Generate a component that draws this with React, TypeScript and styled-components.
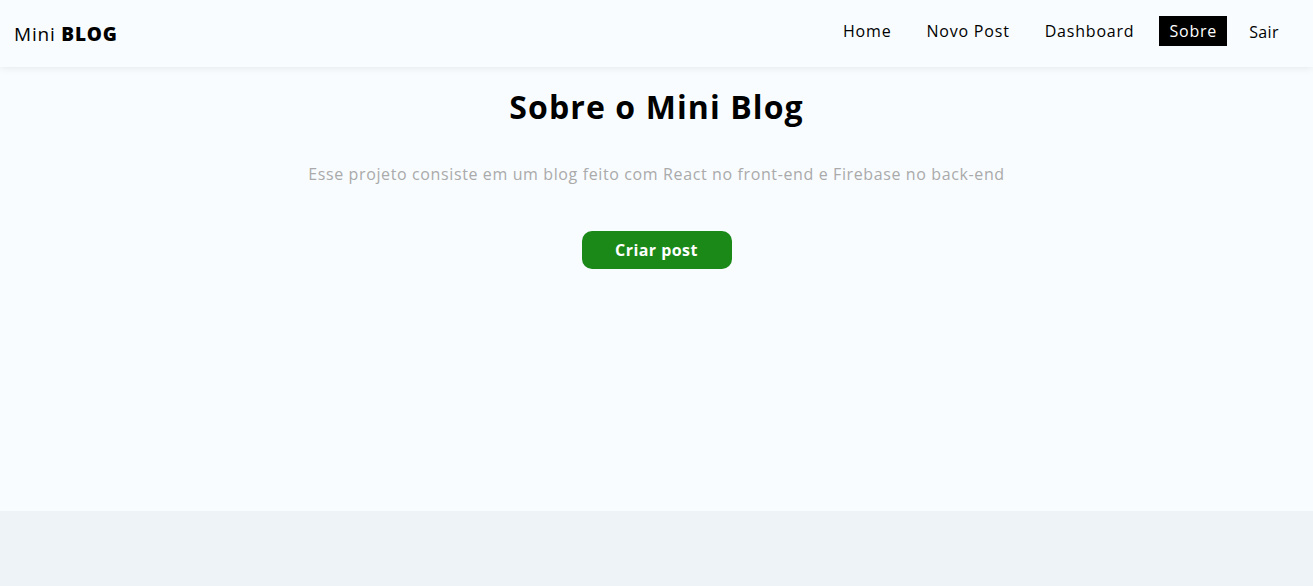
import React from "react";
import styled, { createGlobalStyle } from "styled-components";

const Global = createGlobalStyle`
  * { box-sizing: border-box; }
  body {
    margin: 0;
    background: #f8fcff;
    font-family: "Open Sans", "Noto Sans", sans-serif;
    color: #000;
  }
`;

const Page = styled.div`
  display: flex;
  flex-direction: column;
  min-height: 100vh;
`;

const Navbar = styled.nav`
  display: flex;
  justify-content: space-between;
  align-items: center;
  height: 67px;
  padding: 0 24px 0 14px;
  box-shadow: rgba(0, 0, 0, 0.15) 0px -2px 10px 0px;
  position: relative;
  z-index: 1;
`;

const Brand = styled.a`
  font-size: 19px;
  color: #000;
  text-decoration: none;
  letter-spacing: 0.8px;
  span {
    font-weight: 800;
    text-transform: uppercase;
  }
`;

const Links = styled.ul`
  display: flex;
  list-style: none;
  margin: 0 0 6px;
  padding: 0;
  gap: 15px;
  align-items: center;
`;

const NavLink = styled.a<{ $active?: boolean }>`
  display: block;
  padding: 5px 10px;
  font-size: 16px;
  line-height: 20px;
  text-decoration: none;
  color: ${(p) => (p.$active ? "#fff" : "#000")};
  background: ${(p) => (p.$active ? "#000" : "transparent")};
  letter-spacing: 0.8px;
`;

const LogoutButton = styled.button`
  background: none;
  border: none;
  font-family: inherit;
  font-size: 16px;
  line-height: 20px;
  padding: 6px 10px 4px;
  margin-left: -3px;
  color: #000;
  letter-spacing: 0.4px;
`;

const Main = styled.main`
  min-height: 444px;
  display: flex;
  flex-direction: column;
  align-items: center;
  text-align: center;
`;

const Title = styled.h2`
  margin: 20px 0 0;
  font-size: 32px;
  font-weight: 700;
  line-height: 40px;
  letter-spacing: 1.1px;
`;

const Text = styled.p`
  margin: 37px 0 0;
  color: #aaa;
  font-size: 16px;
  line-height: 20px;
  letter-spacing: 0.62px;
`;

const Button = styled.a`
  margin-top: 47px;
  display: flex;
  align-items: center;
  justify-content: center;
  width: 150px;
  height: 38px;
  border-radius: 10px;
  background: #1a8918;
  color: #fff;
  font-weight: 700;
  font-size: 16px;
  letter-spacing: 0.45px;
  text-decoration: none;
`;

const Footer = styled.footer`
  flex: 1;
  min-height: 75px;
  background: #edf3f6;
`;

export default function App() {
  return (
    <Page>
      <Global />
      <Navbar>
        <Brand href="#">
          Mini <span>Blog</span>
        </Brand>
        <Links>
          <li><NavLink href="#">Home</NavLink></li>
          <li><NavLink href="#">Novo Post</NavLink></li>
          <li><NavLink href="#">Dashboard</NavLink></li>
          <li><NavLink href="#" $active>Sobre</NavLink></li>
          <li><LogoutButton>Sair</LogoutButton></li>
        </Links>
      </Navbar>
      <Main>
        <Title>Sobre o Mini Blog</Title>
        <Text>
          Esse projeto consiste em um blog feito com React no front-end e Firebase no back-end
        </Text>
        <Button href="#">Criar post</Button>
      </Main>
      <Footer />
    </Page>
  );
}
